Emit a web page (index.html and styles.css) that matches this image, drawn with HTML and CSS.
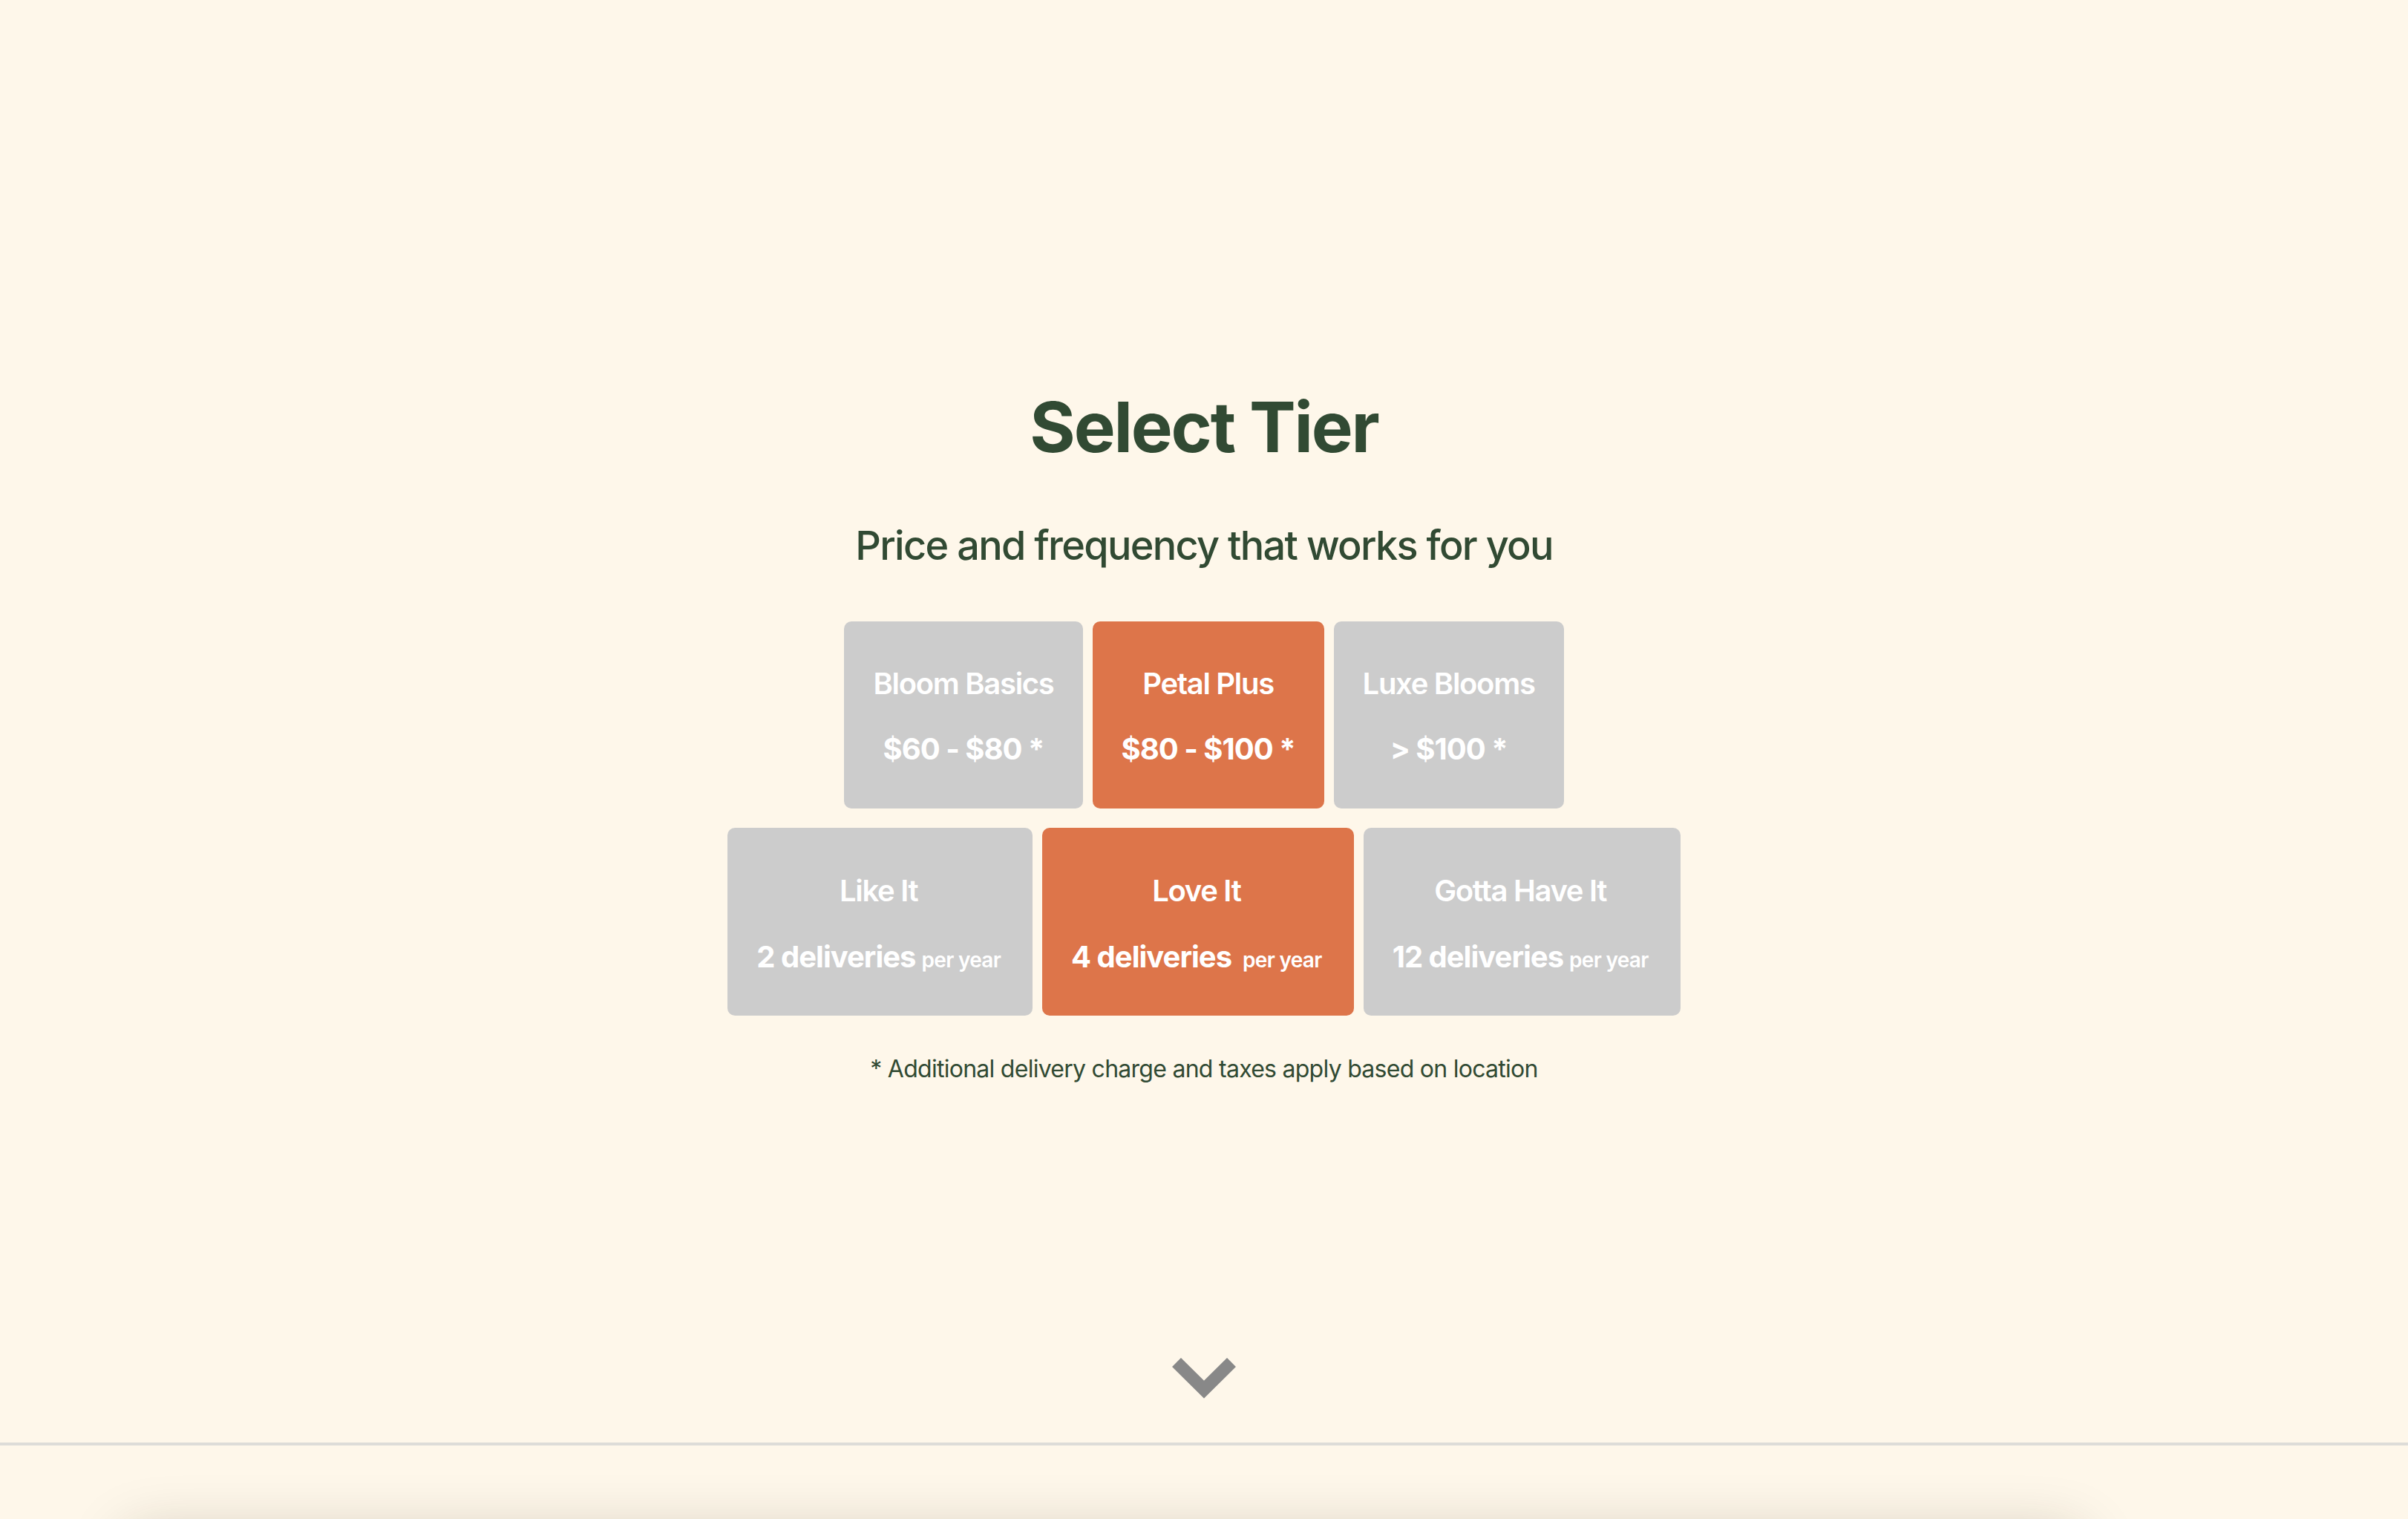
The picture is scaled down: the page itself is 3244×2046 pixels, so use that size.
FILE: index.html
```html
<!DOCTYPE html>
<html lang="en">
<head>
<meta charset="utf-8">
<title>Select Tier</title>
<link rel="stylesheet" href="styles.css">
</head>
<body>
<main class="tier-section">
  <h1 class="title">Select Tier</h1>
  <p class="subtitle">Price and frequency that works for you</p>
  <div class="options">
    <div class="row">
      <div class="card">
        <span class="card-name">Bloom Basics</span>
        <span class="card-value">$60 - $80 *</span>
      </div>
      <div class="card card--active">
        <span class="card-name">Petal Plus</span>
        <span class="card-value">$80 - $100 *</span>
      </div>
      <div class="card">
        <span class="card-name">Luxe Blooms</span>
        <span class="card-value">&gt; $100 *</span>
      </div>
    </div>
    <div class="row row--freq">
      <div class="card">
        <span class="card-name">Like It</span>
        <span class="card-value">2 deliveries<span class="per">per year</span></span>
      </div>
      <div class="card card--active">
        <span class="card-name">Love It</span>
        <span class="card-value">4 deliveries<span class="per per--wide">per year</span></span>
      </div>
      <div class="card">
        <span class="card-name">Gotta Have It</span>
        <span class="card-value">12 deliveries<span class="per">per year</span></span>
      </div>
    </div>
  </div>
  <p class="note">* Additional delivery charge and taxes apply based on location</p>
  <div class="scroll-hint">
    <svg width="86" height="55" viewBox="0 0 86 55" aria-hidden="true">
      <polyline points="6,6 43,42.5 80,6" fill="none" stroke="#888888" stroke-width="17" stroke-linejoin="miter" stroke-linecap="butt"/>
    </svg>
  </div>
</main>
<section class="next">
  <div class="next-card"></div>
</section>
</body>
</html>
```
FILE: styles.css
```css
html, body {
  margin: 0;
  padding: 0;
}

body {
  background: #fef7ea;
  font-family: Inter, "Noto Sans", "Liberation Sans", sans-serif;
  color: #314a33;
}

.tier-section {
  box-sizing: border-box;
  height: 1947px;
  padding: 518px 0 59px;
  border-bottom: 4px solid #dddcd8;
  display: flex;
  flex-direction: column;
  align-items: center;
}

.title {
  margin: 0;
  font-size: 94px;
  line-height: 114px;
  font-weight: 700;
  letter-spacing: -2.2px;
}

.subtitle {
  margin: 71px 0 0;
  font-size: 54px;
  line-height: 64px;
  font-weight: 500;
  letter-spacing: -1.7px;
}

.options {
  margin-top: 70px;
  display: flex;
  flex-direction: column;
  gap: 26px;
}

.row {
  display: flex;
  justify-content: center;
  gap: 13px;
}

.card {
  background: #cccccc;
  color: #ffffff;
  border-radius: 10px;
  padding: 60px 39px 56px;
  display: flex;
  flex-direction: column;
  align-items: center;
  gap: 40px;
}

.card--active {
  background: #dd754a;
}

.row--freq .card {
  padding: 61px 43px 55px 39px;
  gap: 41px;
}

.card-name {
  font-size: 40px;
  line-height: 48px;
  font-weight: 600;
  letter-spacing: -1.3px;
}

.card-value {
  font-size: 40px;
  line-height: 48px;
  font-weight: 700;
  white-space: nowrap;
  letter-spacing: -1px;
}

.per {
  font-size: 28px;
  line-height: 1;
  font-weight: 600;
  margin-left: 8px;
  letter-spacing: -0.7px;
}

.per--wide {
  margin-left: 15px;
}

.note {
  margin: 52px 0 0;
  font-size: 32px;
  line-height: 40px;
  font-weight: 400;
  letter-spacing: -0.73px;
}

.scroll-hint {
  margin-top: auto;
  height: 55px;
  display: flex;
}

.next {
  padding: 120px 440px 200px 170px;
}

.next-card {
  height: 600px;
  background: #fef7ea;
  border-radius: 20px;
  box-shadow: 0 0 80px rgba(40, 30, 0, 0.23);
}
```
